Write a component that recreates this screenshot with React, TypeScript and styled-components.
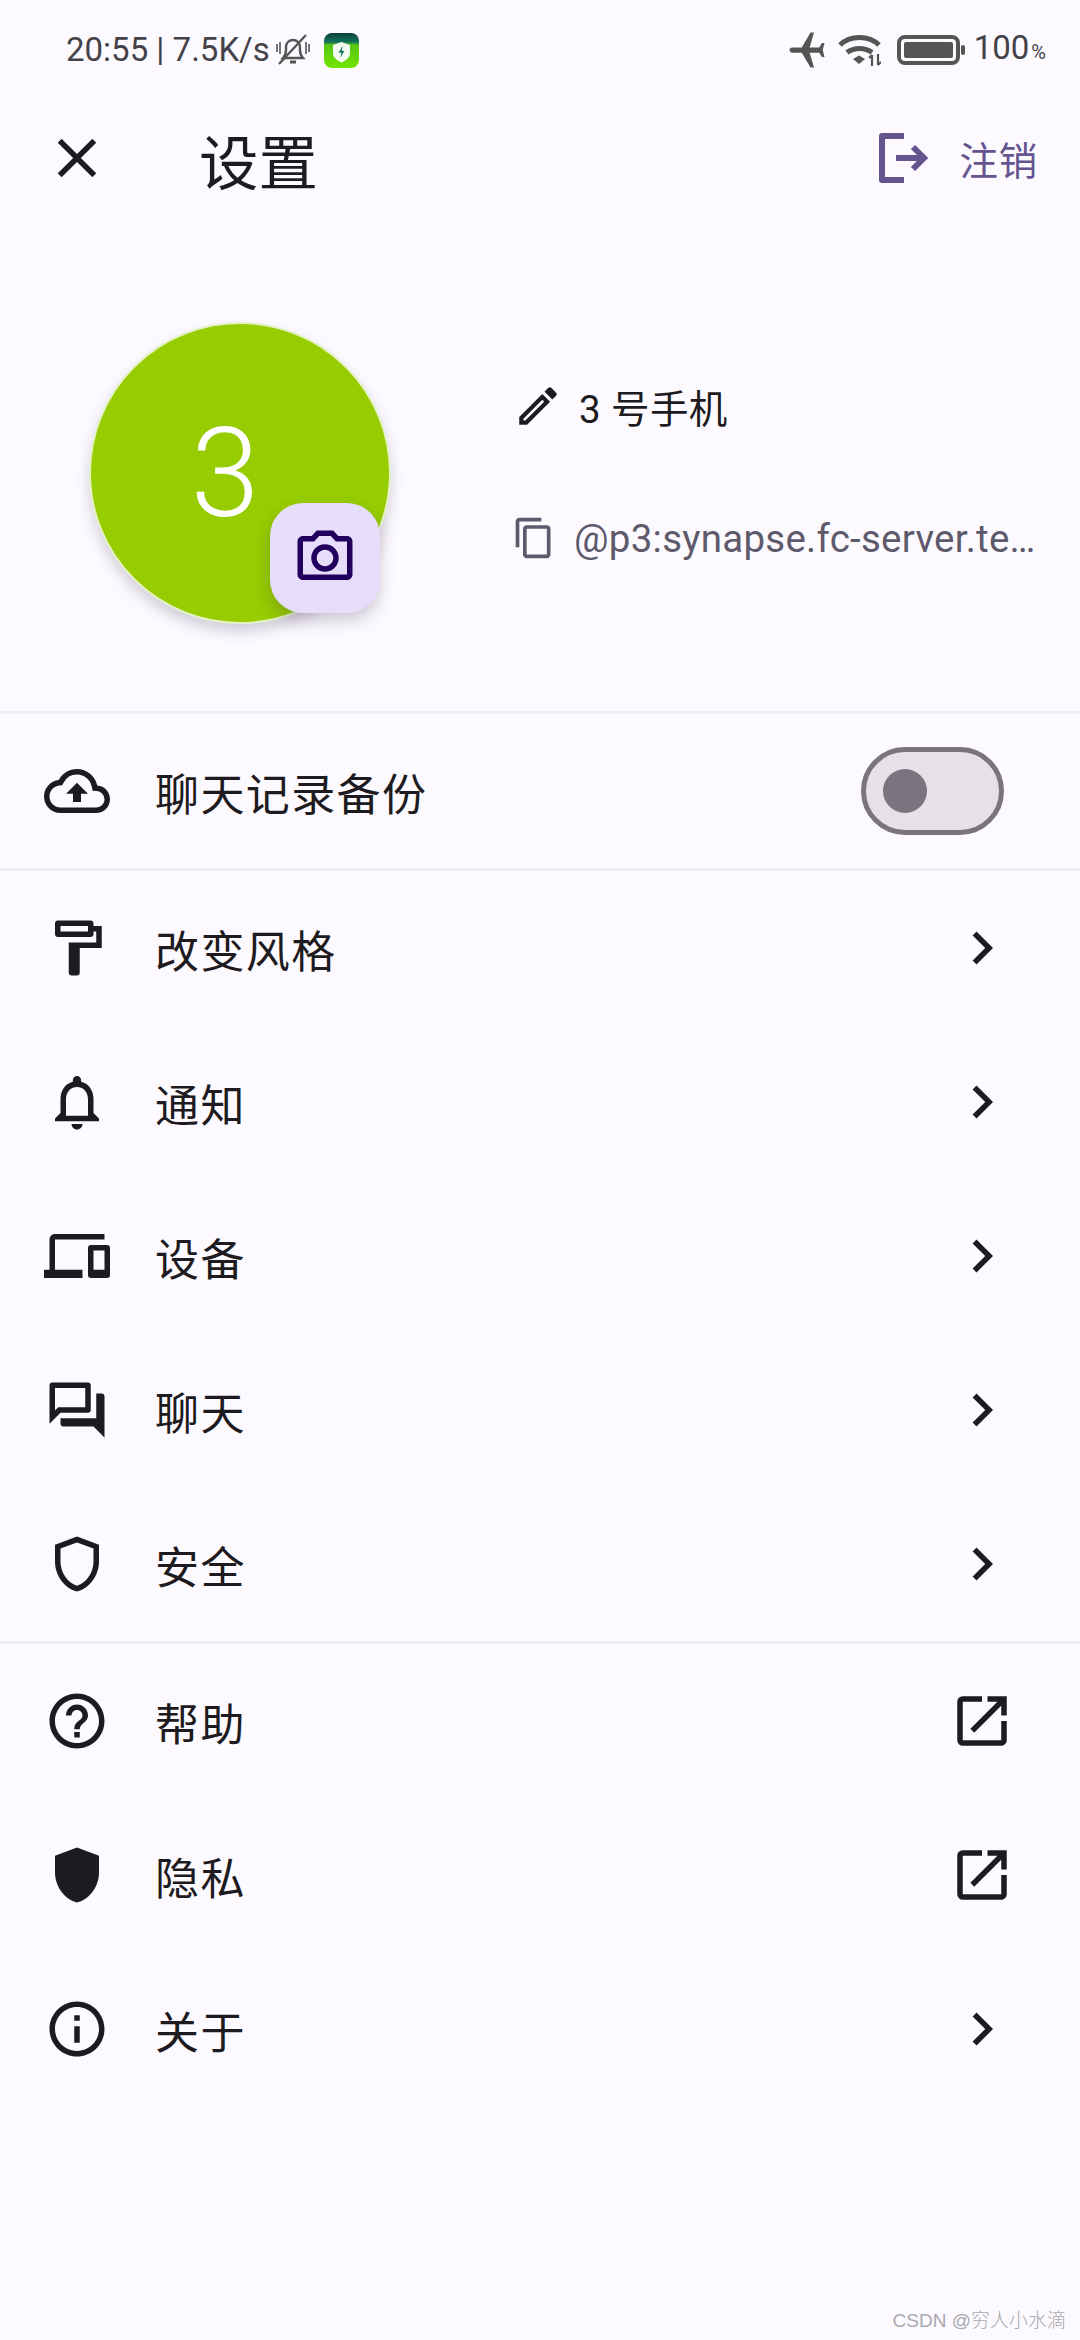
import React from "react";
import styled, { createGlobalStyle } from "styled-components";
import {
  MdAirplanemodeActive,
  MdChevronRight,
  MdClose,
  MdHelpOutline,
  MdInfoOutline,
  MdNotificationsNone,
  MdOpenInNew,
  MdOutlineCameraAlt,
  MdOutlineCloudUpload,
  MdOutlineContentCopy,
  MdOutlineDevices,
  MdOutlineEdit,
  MdOutlineFormatPaint,
  MdOutlineForum,
  MdOutlineShield,
} from "react-icons/md";

const INK = "#1d1b20";
const FONT = `Roboto, "Noto Sans CJK SC", sans-serif`;

const GlobalStyle = createGlobalStyle`
  html, body {
    margin: 0;
    padding: 0;
    background: #fdfaff;
  }
  body {
    font-family: ${FONT};
    color: ${INK};
  }
`;

function SolidShield() {
  return (
    <svg viewBox="0 0 24 24" width="1em" height="1em" fill="currentColor">
      <path d="M12 2 4 5v6.09c0 5.05 3.41 9.76 8 10.91 4.59-1.15 8-5.86 8-10.91V5z" />
    </svg>
  );
}

const groups = [
  [
    { icon: <MdOutlineFormatPaint />, label: "改变风格", external: false },
    { icon: <MdNotificationsNone />, label: "通知", external: false },
    { icon: <MdOutlineDevices />, label: "设备", external: false },
    { icon: <MdOutlineForum />, label: "聊天", external: false },
    { icon: <MdOutlineShield />, label: "安全", external: false },
  ],
  [
    { icon: <MdHelpOutline />, label: "帮助", external: true },
    { icon: <SolidShield />, label: "隐私", external: true },
    { icon: <MdInfoOutline />, label: "关于", external: false },
  ],
];

function MutedBell() {
  return (
    <BellSvg viewBox="0 0 36 36" fill="none" stroke="#555" strokeWidth="2.4">
      <path d="M8 26c2-2 3-4 3-8v-3c0-4 3-7 7-7s7 3 7 7v3c0 4 1 6 3 8z" />
      <path d="M15 30h6" strokeWidth="3" />
      <path d="M4 32 31 3" />
      <path d="M2 12v8M5 10v12M31 10v12M34 12v8" strokeWidth="1.6" />
    </BellSvg>
  );
}

function BatteryGuardIcon() {
  return (
    <AppIconSvg viewBox="0 0 35 35">
      <defs>
        <linearGradient id="guard" x1="0" y1="0" x2="0" y2="1">
          <stop offset="0" stopColor="#0b3f3c" />
          <stop offset="0.26" stopColor="#14735a" />
          <stop offset="0.34" stopColor="#58c414" />
          <stop offset="1" stopColor="#72e600" />
        </linearGradient>
      </defs>
      <rect width="35" height="35" rx="8" fill="url(#guard)" />
      <path d="M17.5 9l8.5 3v8c0 4.6-4 7.400-8.500 9.500-4.500-2.100-8.500-4.900-8.500-9.500v-8z" fill="#f4fbf2" />
      <path d="M18.700 12.500l-4.200 7.200h2.800l-1 5.300 4.200-7.200h-2.800z" fill="#1c7a62" />
    </AppIconSvg>
  );
}

function WifiIcon() {
  return (
    <WifiSvg viewBox="0 0 43 32" fill="none" stroke="#555" strokeWidth="5">
      <path d="M2 11C12 1 31 1 41 11" />
      <path d="M9 18.5c7-5.500 18-5.500 25 0" />
      <path d="M15 25l6-3.500 6 3.500-6 5z" fill="#555" stroke="none" />
      <path d="M34 21v11M31 24l3-3M40 20v11M43 28l-3 3" strokeWidth="2.2" />
    </WifiSvg>
  );
}

function BatteryIcon() {
  return (
    <BatterySvg viewBox="0 0 68 30">
      <rect x="2" y="2" width="59" height="26" rx="6" fill="none" stroke="#555" strokeWidth="4" />
      <rect x="7" y="7" width="49" height="16" rx="2" fill="#555" />
      <rect x="64" y="10" width="4" height="10" rx="2" fill="#555" />
    </BatterySvg>
  );
}

function LogoutIcon() {
  return (
    <LogoutSvg viewBox="0 0 50 50" fill="none" stroke="#65558f" strokeWidth="6">
      <path d="M25 3H3v44h22" strokeLinejoin="round" />
      <path d="M17 25h28" />
      <path d="M34 14l11 11-11 11" strokeWidth="6" />
    </LogoutSvg>
  );
}

export default function App() {
  return (
    <Page>
      <GlobalStyle />
      <StatusBar>
        <StatusLeft>
          <StatusText>20:55 | 7.5K/s</StatusText>
          <MutedBell />
          <BatteryGuardIcon />
        </StatusLeft>
        <StatusRight>
          <PlaneIcon />
          <WifiIcon />
          <BatteryIcon />
          <StatusText>
            100<Percent>%</Percent>
          </StatusText>
        </StatusRight>
      </StatusBar>

      <AppBar>
        <CloseSlot>
          <MdClose />
        </CloseSlot>
        <Title>设置</Title>
        <LogoutButton>
          <LogoutIcon />
          注销
        </LogoutButton>
      </AppBar>

      <Profile>
        <Avatar>
          <AvatarInitial>3</AvatarInitial>
          <CameraButton>
            <MdOutlineCameraAlt />
          </CameraButton>
        </Avatar>
        <ProfileInfo>
          <NameRow>
            <MdOutlineEdit />3 号手机
          </NameRow>
          <HandleRow>
            <MdOutlineContentCopy />
            <Handle>@p3:synapse.fc-server.te…</Handle>
          </HandleRow>
        </ProfileInfo>
      </Profile>

      <Divider />
      <Row>
        <RowIcon>
          <MdOutlineCloudUpload />
        </RowIcon>
        <RowLabel>聊天记录备份</RowLabel>
        <Switch>
          <SwitchThumb />
        </Switch>
      </Row>

      {groups.map((group) => (
        <React.Fragment key={group[0].label}>
          <Divider />
          {group.map((item) => (
            <Row key={item.label}>
              <RowIcon>{item.icon}</RowIcon>
              <RowLabel>{item.label}</RowLabel>
              <RowTrailing>{item.external ? <MdOpenInNew /> : <MdChevronRight />}</RowTrailing>
            </Row>
          ))}
        </React.Fragment>
      ))}

      <Watermark>CSDN @穷人小水滴</Watermark>
    </Page>
  );
}

const Page = styled.div`
  position: relative;
  width: 1080px;
  height: 2340px;
  overflow: hidden;
  background: #fdfaff;
`;

const StatusBar = styled.div`
  display: flex;
  align-items: center;
  justify-content: space-between;
  height: 100px;
  padding: 0 34px 0 66px;
  box-sizing: border-box;
  color: #444248;
`;

const StatusLeft = styled.div`
  display: flex;
  align-items: center;
  gap: 5px;
`;

const StatusRight = styled.div`
  display: flex;
  align-items: center;
  gap: 14px;
`;

const StatusText = styled.span`
  font-size: 33px;
  line-height: 40px;
`;

const Percent = styled.span`
  font-size: 20px;
  margin-left: 2px;
`;

const BellSvg = styled.svg`
  width: 36px;
  height: 36px;
`;

const AppIconSvg = styled.svg`
  width: 35px;
  height: 35px;
  margin-left: 8px;
`;

const PlaneIcon = styled(MdAirplanemodeActive)`
  width: 42px;
  height: 42px;
  color: #555;
  transform: rotate(-90deg);
  margin-right: -4px;
`;

const WifiSvg = styled.svg`
  width: 43px;
  height: 32px;
  margin-right: 2px;
`;

const BatterySvg = styled.svg`
  width: 68px;
  height: 30px;
  margin-right: -5px;
`;

const AppBar = styled.div`
  display: flex;
  align-items: center;
  height: 124px;
  padding: 0 42px 8px 0;
  box-sizing: border-box;
`;

const CloseSlot = styled.div`
  display: flex;
  align-items: center;
  justify-content: center;
  width: 66px;
  margin-left: 44px;
  font-size: 66px;
  color: ${INK};
`;

const Title = styled.h1`
  flex: 1;
  margin: 14px 0 0 89px;
  font-size: 59.5px;
  font-weight: 400;
  line-height: 80px;
`;

const LogoutButton = styled.div`
  display: flex;
  align-items: center;
  gap: 31px;
  font-size: 38.5px;
  letter-spacing: 0.7px;
  color: #65558f;
`;

const LogoutSvg = styled.svg`
  width: 50px;
  height: 50px;
`;

const Profile = styled.div`
  display: flex;
  align-items: flex-start;
  height: 487px;
  padding: 98px 0 0 89px;
  box-sizing: border-box;
`;

const Avatar = styled.div`
  position: relative;
  display: flex;
  align-items: center;
  justify-content: center;
  flex: none;
  width: 302px;
  height: 302px;
  box-sizing: border-box;
  border: 2px solid #e4f2c6;
  border-radius: 50%;
  background: #96cc00;
  color: #fff;
  font-size: 123.75px;
  font-weight: 350;
  box-shadow: 0 8px 14px rgba(60, 50, 80, 0.22);
`;

const AvatarInitial = styled.span`
  margin-right: 30px;
`;

const CameraButton = styled.div`
  position: absolute;
  left: 179px;
  top: 179px;
  display: flex;
  align-items: center;
  justify-content: center;
  width: 110px;
  height: 110px;
  border-radius: 33px;
  background: #e6ddfb;
  color: #21005d;
  font-size: 66px;
  box-shadow: 0 8px 16px rgba(60, 50, 80, 0.24);
`;

const ProfileInfo = styled.div`
  display: flex;
  flex-direction: column;
  gap: 82px;
  width: 518px;
  margin: 59px 0 0 125px;
`;

const NameRow = styled.div`
  display: flex;
  align-items: center;
  gap: 16px;
  height: 50px;
  font-size: 38.5px;
  letter-spacing: 0.4px;
  white-space: pre;

  svg {
    flex: none;
    width: 50px;
    height: 50px;
    margin-left: -3px;
  }
`;

const HandleRow = styled.div`
  display: flex;
  align-items: center;
  gap: 18px;
  height: 50px;
  color: #5e5a6c;

  svg {
    flex: none;
    width: 44px;
    height: 44px;
    margin-left: -4px;
  }
`;

const Handle = styled.span`
  font-size: 38.5px;
  letter-spacing: 0.25px;
  white-space: nowrap;
`;

const Divider = styled.div`
  height: 3px;
  background: #eeeef3;
`;

const Row = styled.div`
  display: flex;
  align-items: center;
  height: 154px;
  padding: 0 65px 0 44px;
  box-sizing: border-box;
`;

const RowIcon = styled.div`
  display: flex;
  flex: none;
  font-size: 66px;
  color: ${INK};
`;

const RowLabel = styled.span`
  flex: 1;
  margin: 10px 0 0 45px;
  font-size: 44px;
  letter-spacing: 1.4px;
  line-height: 60px;
`;

const RowTrailing = styled.div`
  display: flex;
  flex: none;
  font-size: 66px;
  color: ${INK};
`;

const Switch = styled.div`
  display: flex;
  align-items: center;
  flex: none;
  width: 143px;
  height: 88px;
  margin-right: 11px;
  padding-left: 17px;
  box-sizing: border-box;
  border: 5.5px solid #79747e;
  border-radius: 44px;
  background: #e6e0e9;
`;

const SwitchThumb = styled.div`
  width: 44px;
  height: 44px;
  border-radius: 50%;
  background: #79747e;
`;

const Watermark = styled.div`
  position: absolute;
  right: 14px;
  bottom: 6px;
  font-family: "Liberation Sans", "Noto Sans CJK SC", sans-serif;
  font-size: 19px;
  font-weight: 300;
  line-height: 26px;
  color: #a9a9ad;
`;
